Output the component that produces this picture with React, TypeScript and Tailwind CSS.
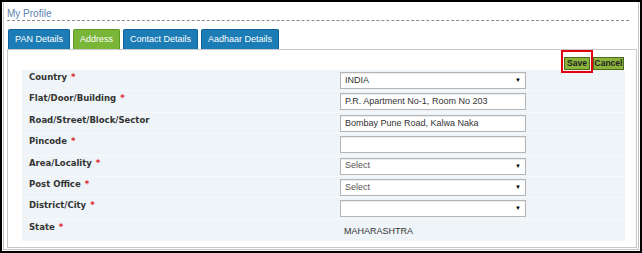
import React from 'react';

const rows: { label: string; req: boolean; kind: 'select' | 'input' | 'text'; value: string }[] = [
  { label: 'Country', req: true, kind: 'select', value: 'INDIA' },
  { label: 'Flat/Door/Building', req: true, kind: 'input', value: 'P.R. Apartment No-1, Room No 203' },
  { label: 'Road/Street/Block/Sector', req: false, kind: 'input', value: 'Bombay Pune Road, Kalwa Naka' },
  { label: 'Pincode', req: true, kind: 'input', value: '' },
  { label: 'Area/Locality', req: true, kind: 'select', value: 'Select' },
  { label: 'Post Office', req: true, kind: 'select', value: 'Select' },
  { label: 'District/City', req: true, kind: 'select', value: '' },
  { label: 'State', req: true, kind: 'text', value: 'MAHARASHTRA' },
];

const tabs = [
  { name: 'PAN Details', w: 'w-[62px]' },
  { name: 'Address', w: 'w-[47px]' },
  { name: 'Contact Details', w: 'w-[75px]' },
  { name: 'Aadhaar Details', w: 'w-[78px]' },
];

const App = () => {
  return (
    <div className="w-[642px] h-[253px] bg-white border-2 border-black flex overflow-hidden">
      {/* marco gris de la página */}
      <div className="flex-1 ml-[1px] mr-[1px] mb-[1px] border-x border-b border-[#c4c4c4] flex flex-col pl-[3px] pr-[1px]">
        <div className="h-[19px] pt-[6px] mr-[8px] border-b border-dashed border-[#8a8a8a] font-['Liberation_Sans',Arial,sans-serif] text-[10px] leading-[11px] text-[#5b82ad]">
          My Profile
        </div>

        {/* pestañas */}
        <div className="flex gap-[3px] mt-[8px] pl-[1px] h-[20px] font-['Liberation_Sans',Arial,sans-serif] text-[9px]">
          {tabs.map((t) => (
            <div
              key={t.name}
              className={`${t.w} flex items-center justify-center whitespace-nowrap text-white rounded-t-[2px] border border-b-0 ${
                t.name === 'Address' ? 'bg-[#79b536] border-[#5e9a22]' : 'bg-[#1b7cb6] border-[#11629a]'
              }`}
            >
              {t.name}
            </div>
          ))}
        </div>

        {/* panel de contenido */}
        <div className="flex-1 border border-[#c8c8c8] mb-[1px] flex flex-col pl-[14px] pr-[11px]">
          <div className="flex justify-end pt-[7px] h-[20px] gap-[3px] pr-[1px] font-['Liberation_Sans',Arial,sans-serif] text-[8.5px] font-bold">
            <div className="relative">
              <button className="h-[13px] w-[26px] bg-[#8cb43c] border border-[#4d6b1c] text-[#222] leading-[11px]">
                Save
              </button>
              <div className="absolute -left-[3px] -right-[3px] -top-[7px] -bottom-[3px] border-2 border-[#e3000f]" />
            </div>
            <button className="h-[13px] w-[31px] bg-[#8cb43c] border border-[#4d6b1c] text-[#222] leading-[11px]">
              Cancel
            </button>
          </div>

          <div className="bg-[#eef4f8] flex flex-col">
            {rows.map((r) => (
              <div key={r.label} className="h-[21.4px] flex border-b border-[#f6f9fc] last:border-b-0">
                <div className="w-[318px] pl-[7px] pt-[2px] font-['DejaVu_Sans',Verdana,sans-serif] font-bold text-[8.5px] leading-[10px] text-[#333]">
                  {r.label}
                  {r.req && <span className="text-[#e0222a] ml-[4px]">*</span>}
                </div>
                <div className="pt-[2px]">
                  {r.kind === 'text' ? (
                    <div className="pl-[4px] pt-[3px] font-['Liberation_Sans',Arial,sans-serif] text-[9px] text-[#333]">
                      {r.value}
                    </div>
                  ) : (
                    <div className="w-[186px] h-[17px] bg-white border border-[#b5b5b5] shadow-[inset_0_1px_1px_rgba(0,0,0,0.08)] flex items-center justify-between pl-[4px] pr-[4px] font-['Liberation_Sans',Arial,sans-serif] text-[9px] text-[#333]">
                      <span className={r.value === 'Select' ? 'text-[#555]' : ''}>{r.value}</span>
                      {r.kind === 'select' && <span className="text-[6px] text-black">▼</span>}
                    </div>
                  )}
                </div>
              </div>
            ))}
          </div>
        </div>
      </div>
    </div>
  );
};

export default App;
